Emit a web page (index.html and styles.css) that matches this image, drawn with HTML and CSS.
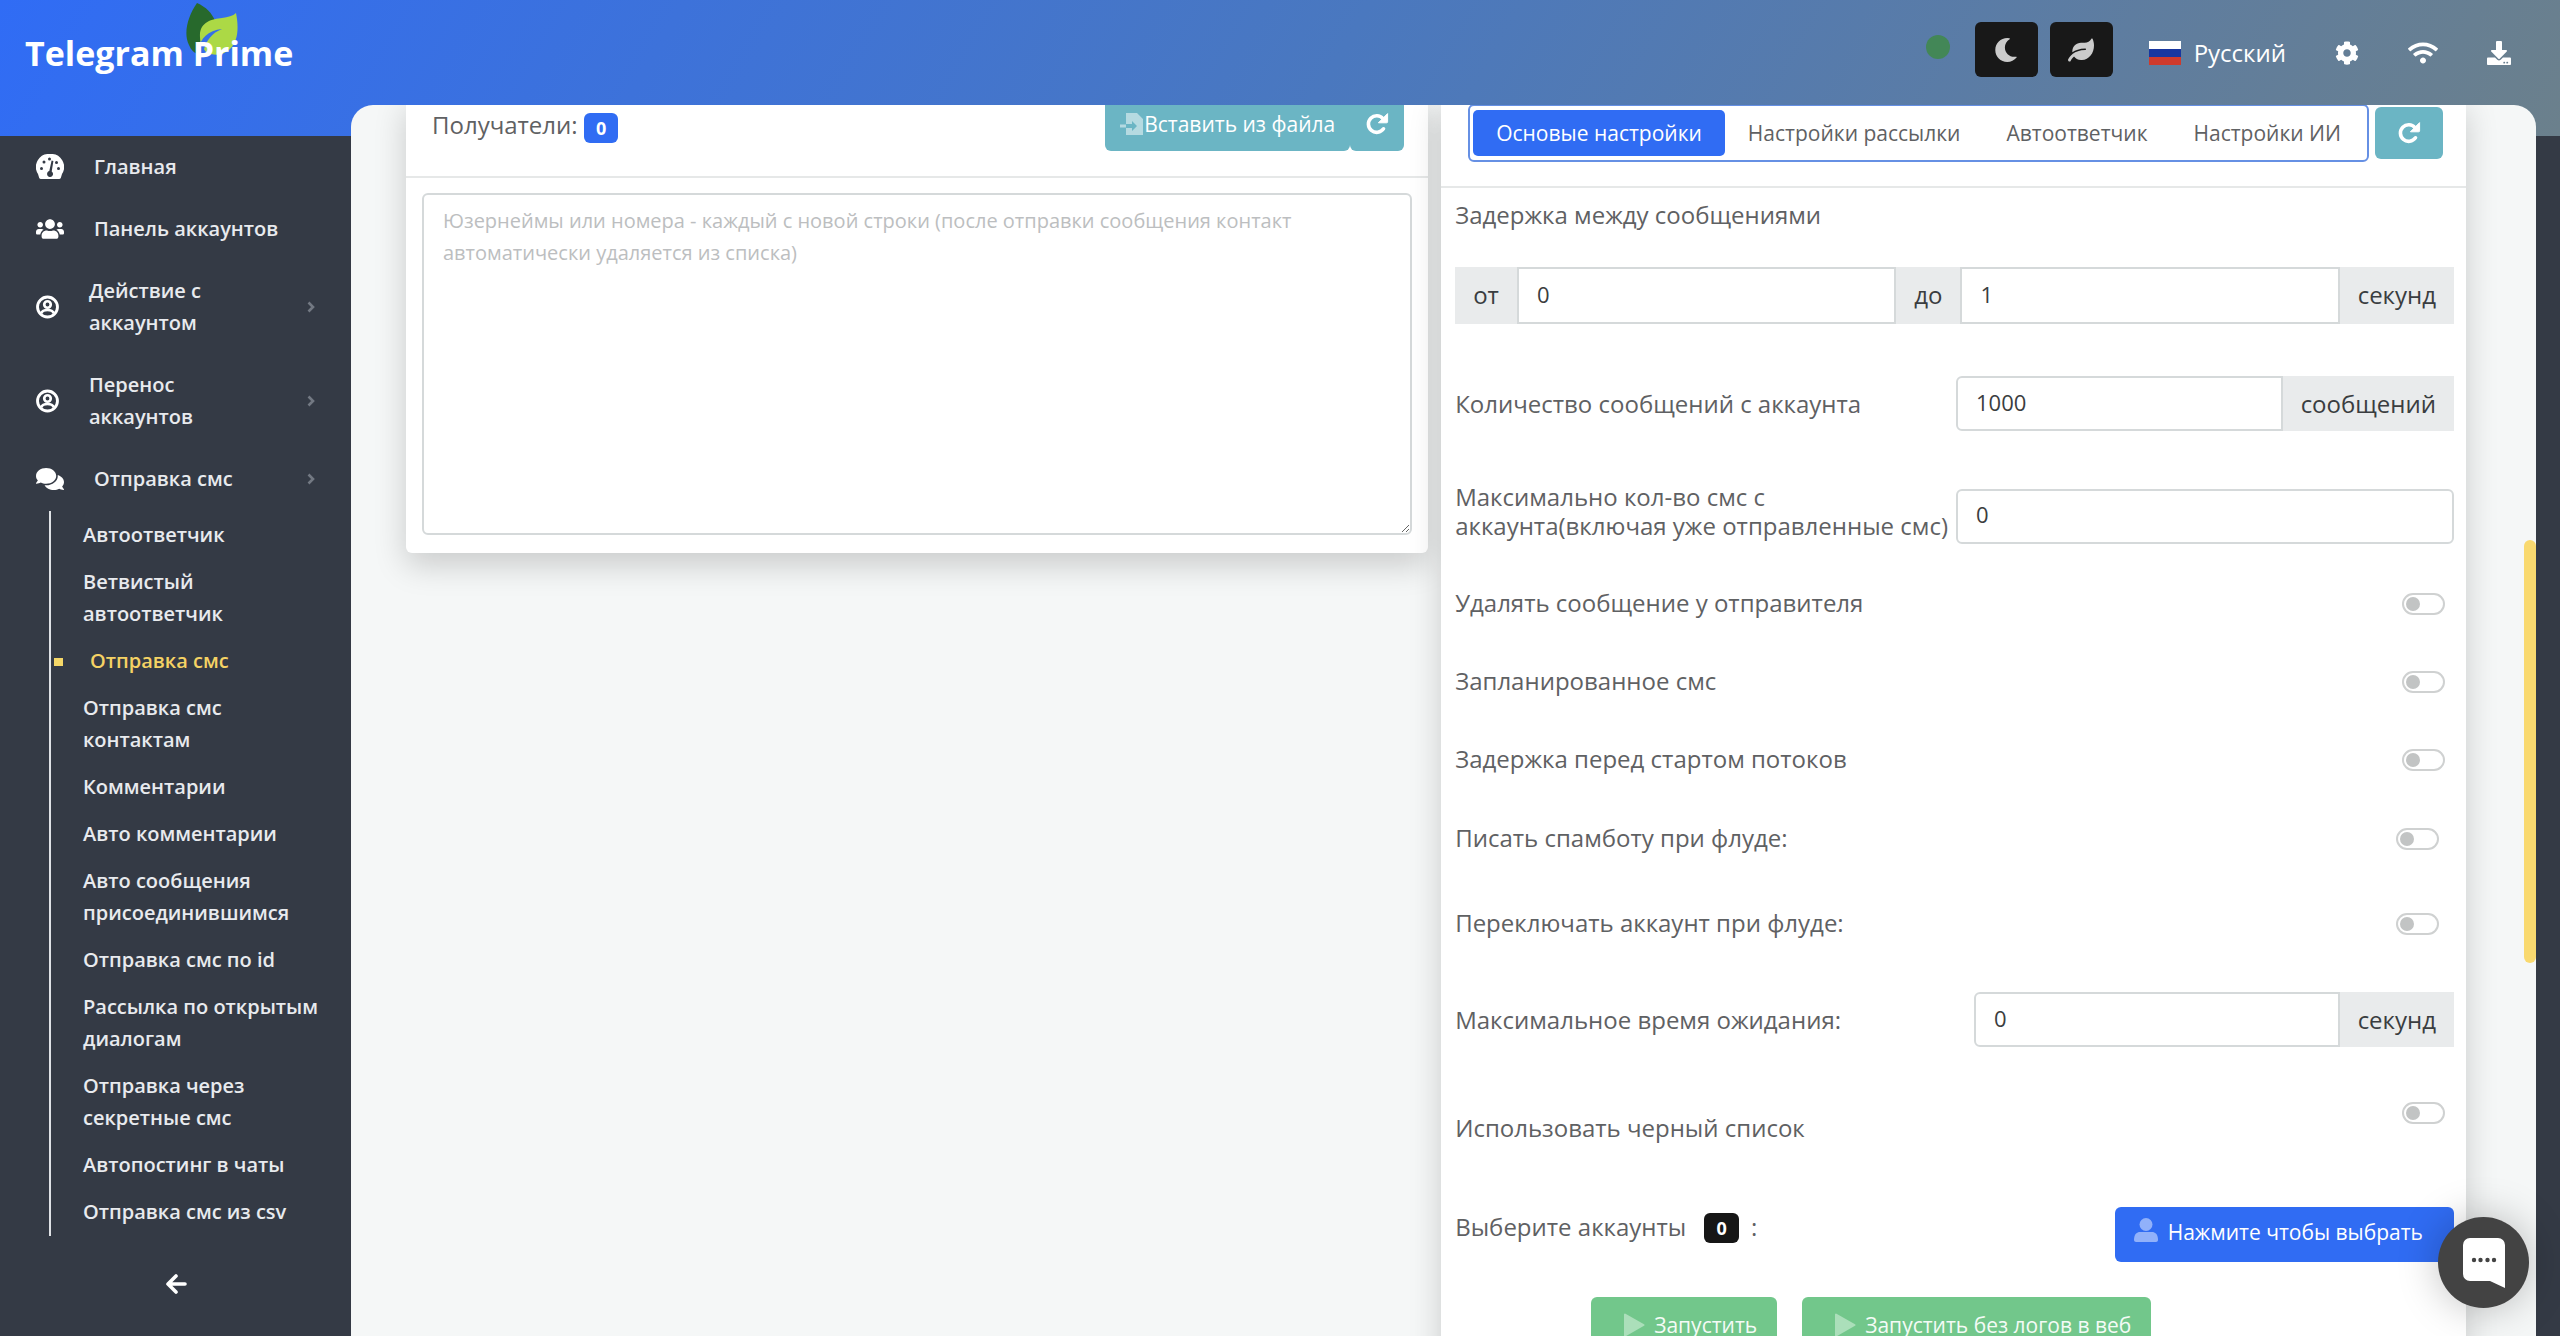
FILE: index.html
```html
<!DOCTYPE html>
<html lang="ru">
<head>
    <meta charset="UTF-8">
    <meta name="viewport" content="width=device-width, initial-scale=1.0">
    <title>Telegram Prime</title>
    <link rel="stylesheet" href="styles.css">
</head>
<body>
    <!-- shared icons -->
    <svg class="sprite" aria-hidden="true">
        <symbol id="i-redo" viewBox="0 0 24 24">
            <path d="M18.5 16.8A8.3 8.3 0 1 1 18 6.6" fill="none" stroke="currentColor" stroke-width="3.6" stroke-linecap="round"/>
            <path d="M22.6 1.6v8.2a1 1 0 0 1-1 1h-8.2z" fill="currentColor" stroke="currentColor" stroke-linejoin="round"/>
        </symbol>
        <symbol id="i-user-circle" viewBox="0 0 24 24">
            <circle cx="12" cy="12" r="10.4" fill="none" stroke="currentColor" stroke-width="3"/>
            <circle cx="12" cy="9.4" r="3.4" fill="none" stroke="currentColor" stroke-width="2.8"/>
            <path d="M5.5 18.5c1-2.6 3-3.4 6.5-3.4s5.5.8 6.5 3.4" fill="none" stroke="currentColor" stroke-width="2.8"/>
        </symbol>
        <symbol id="i-chevron" viewBox="0 0 8 12">
            <path d="M1.5 1.5 6 6l-4.5 4.5" fill="none" stroke="currentColor" stroke-width="2.6"/>
        </symbol>
        <symbol id="i-play" viewBox="0 0 22 24">
            <path d="M2 1.5v21L20.5 12z" fill="currentColor" stroke="currentColor" stroke-width="2" stroke-linejoin="round"/>
        </symbol>
    </svg>

    <header class="topbar">
        <a class="brand" href="#">
            <svg class="brand-leaf" viewBox="0 0 52 52" aria-hidden="true">
                <path d="M11 0C2 13-3 30 3 42c2 5 5 8 9 9 1-14 5-24 17-33C26 10 20 4 11 0z" fill="#27692c"/>
                <path d="M50 10c3 15 2 28-6 36-7 7-17 7-24 3-3-4-6-9-6-15C13 19 26 16 36 15c6-1 11-2 14-5z" fill="#acd945"/>
                <path d="M13 46c1-10 9-19 23-20-10 4-16 11-19 24z" fill="#356fe6"/>
            </svg>
            <span class="brand-name">Telegram Prime</span>
        </a>

        <div class="topbar-tools">
            <span class="online-dot"></span>
            <button class="dark-button" type="button" aria-label="Тёмная тема">
                <svg viewBox="0 0 512 512"><path fill="currentColor" d="M283.211 512c78.962 0 151.079-35.925 198.857-94.792 7.068-8.708-.639-21.43-11.562-19.35-124.203 23.654-238.262-71.576-238.262-196.954 0-72.222 38.662-138.635 101.498-174.394 9.686-5.512 7.25-20.197-3.756-22.23A258.156 258.156 0 0 0 283.211 0c-141.309 0-256 114.511-256 256 0 141.309 114.511 256 256 256z"/></svg>
            </button>
            <button class="dark-button" type="button" aria-label="Светлая тема">
                <svg viewBox="0 0 576 512"><path fill="currentColor" d="M546.2 9.7c-5.6-12.5-21.6-13-28.3-1.2C486.9 62.4 431.4 96 368 96h-80C182 96 96 182 96 288c0 7 .8 13.7 1.5 20.5C161.3 262.8 253.4 224 384 224c8.8 0 16 7.2 16 16s-7.2 16-16 16C132.6 256 26 410.1 2.4 468c-6.6 16.3 1.2 34.9 17.5 41.6 16.4 6.8 35-1.1 41.8-17.3 1.5-3.6 20.9-47.9 71.9-90.6 32.4 43.9 94 85.8 174.9 77.2C465.5 467.5 576 326.7 576 154.3c0-50.2-10.8-102.2-29.8-144.6z"/></svg>
            </button>
            <a class="language" href="#">
                <svg class="flag" viewBox="0 0 32 24" preserveAspectRatio="none"><path fill="#fff" d="M0 0h32v8H0z"/><path fill="#1837a0" d="M0 8h32v8H0z"/><path fill="#cf3a2c" d="M0 16h32v8H0z"/></svg>
                Русский
            </a>
            <a class="tool" href="#" aria-label="Настройки">
                <svg viewBox="0 0 512 512"><path fill="currentColor" d="M487.4 315.7l-42.6-24.6c4.3-23.2 4.3-47 0-70.2l42.6-24.6c4.9-2.8 7.1-8.6 5.5-14-11.1-35.6-30-67.8-54.7-94.6-3.8-4.1-10-5.1-14.8-2.3L380.8 110c-17.9-15.4-38.5-27.3-60.8-35.1V25.8c0-5.6-3.9-10.5-9.4-11.7-36.7-8.2-74.3-7.8-109.2 0-5.5 1.2-9.4 6.1-9.4 11.7V75c-22.2 7.9-42.8 19.8-60.8 35.1L88.7 85.5c-4.9-2.8-11-1.9-14.8 2.3-24.7 26.7-43.6 58.9-54.7 94.6-1.7 5.4.6 11.2 5.5 14L67.3 221c-4.3 23.2-4.3 47 0 70.2l-42.6 24.6c-4.9 2.8-7.1 8.6-5.5 14 11.1 35.6 30 67.8 54.7 94.6 3.8 4.1 10 5.1 14.8 2.3l42.6-24.6c17.9 15.4 38.5 27.3 60.8 35.1v49.2c0 5.6 3.9 10.5 9.4 11.7 36.7 8.2 74.3 7.8 109.2 0 5.5-1.2 9.4-6.1 9.4-11.7v-49.2c22.2-7.9 42.8-19.8 60.8-35.1l42.6 24.6c4.9 2.8 11 1.9 14.8-2.3 24.7-26.7 43.6-58.9 54.7-94.6 1.5-5.5-.7-11.3-5.6-14.1zM256 336c-44.1 0-80-35.9-80-80s35.9-80 80-80 80 35.9 80 80-35.9 80-80 80z"/></svg>
            </a>
            <a class="tool" href="#" aria-label="Прокси">
                <svg class="wifi" viewBox="0 0 640 512"><path fill="currentColor" d="M634.91 154.88C457.74-8.99 182.19-8.93 5.09 154.88c-6.66 6.16-6.79 16.59-.35 22.98l34.24 33.97c6.14 6.1 16.02 6.23 22.4.38 145.92-133.68 371.3-133.71 517.25 0 6.38 5.85 16.26 5.71 22.4-.38l34.24-33.97c6.43-6.39 6.3-16.82-.36-22.98zM320 352c-35.35 0-64 28.65-64 64s28.65 64 64 64 64-28.65 64-64-28.65-64-64-64zm202.67-83.59c-115.26-101.93-290.21-101.82-405.34 0-6.9 6.1-7.12 16.69-.57 23.15l34.44 33.99c6 5.92 15.66 6.32 22.05.8 83.95-72.57 209.74-72.41 293.49 0 6.39 5.52 16.05 5.13 22.05-.8l34.44-33.99c6.56-6.46 6.33-17.06-.56-23.15z"/></svg>
            </a>
            <a class="tool" href="#" aria-label="Скачать">
                <svg viewBox="0 0 512 512"><path fill="currentColor" d="M216 0h80c13.3 0 24 10.7 24 24v168h87.7c17.8 0 26.7 21.5 14.1 34.1L269.7 378.3c-7.5 7.5-19.8 7.5-27.3 0L90.1 226.1c-12.6-12.6-3.7-34.1 14.1-34.1H192V24c0-13.3 10.7-24 24-24zm296 376v112c0 13.3-10.7 24-24 24H24c-13.3 0-24-10.7-24-24V376c0-13.3 10.7-24 24-24h146.7l49 49c20.1 20.1 52.5 20.1 72.6 0l49-49H488c13.3 0 24 10.7 24 24zm-124 88c0-11-9-20-20-20s-20 9-20 20 9 20 20 20 20-9 20-20zm64 0c0-11-9-20-20-20s-20 9-20 20 9 20 20 20 20-9 20-20z"/></svg>
            </a>
        </div>
    </header>

    <div class="layout">
        <nav class="sidebar">
            <ul class="menu">
                <li><a class="menu-link" href="#">
                    <svg class="menu-icon" viewBox="0 0 28 26"><path fill="currentColor" d="M14 0a13 13 0 0 0-12 20c1 3 1 5 3 5h18c2 0 2-2 3-5A13 13 0 0 0 14 0z"/><g fill="#343a45"><circle cx="5.5" cy="14.5" r="1.5"/><circle cx="8" cy="8" r="1.5"/><circle cx="13.5" cy="5" r="1.5"/><circle cx="22.5" cy="14.5" r="1.5"/><circle cx="20.5" cy="8.5" r="1.5"/><path d="M15.6 6.5l1.8.5-1.7 10.5a3 3 0 1 1-2.4-.4z"/></g></svg>
                    <span class="menu-text">Главная</span>
                </a></li>
                <li><a class="menu-link" href="#">
                    <svg class="menu-icon" viewBox="0 0 640 512"><path fill="currentColor" d="M96 224c35.3 0 64-28.7 64-64s-28.7-64-64-64-64 28.7-64 64 28.7 64 64 64zm448 0c35.3 0 64-28.7 64-64s-28.7-64-64-64-64 28.7-64 64 28.7 64 64 64zm32 32h-64c-17.6 0-33.5 7.1-45.1 18.6 40.3 22.1 68.9 62 75.1 109.4h66c17.7 0 32-14.3 32-32v-32c0-35.3-28.7-64-64-64zm-256 0c61.9 0 112-50.1 112-112S381.9 32 320 32 208 82.1 208 144s50.1 112 112 112zm76.8 32h-8.3c-20.8 10-43.9 16-68.5 16s-47.6-6-68.5-16h-8.3C179.6 288 128 339.6 128 403.2V432c0 26.5 21.5 48 48 48h288c26.5 0 48-21.5 48-48v-28.8c0-63.6-51.6-115.2-115.2-115.2zm-223.7-13.4C161.5 263.1 145.6 256 128 256H64c-35.3 0-64 28.7-64 64v32c0 17.7 14.3 32 32 32h65.9c6.3-47.4 34.9-87.3 75.2-109.4z"/></svg>
                    <span class="menu-text">Панель аккаунтов</span>
                </a></li>
                <li><a class="menu-link" href="#">
                    <svg class="menu-icon round"><use href="#i-user-circle"/></svg>
                    <span class="menu-text">Действие с<br>аккаунтом</span>
                    <svg class="chevron"><use href="#i-chevron"/></svg>
                </a></li>
                <li><a class="menu-link" href="#">
                    <svg class="menu-icon round"><use href="#i-user-circle"/></svg>
                    <span class="menu-text">Перенос<br>аккаунтов</span>
                    <svg class="chevron"><use href="#i-chevron"/></svg>
                </a></li>
                <li><a class="menu-link" href="#">
                    <svg class="menu-icon" viewBox="0 0 576 512"><path fill="currentColor" d="M416 192c0-88.4-93.1-160-208-160S0 103.6 0 192c0 34.3 14.1 65.9 38 92-13.4 30.2-35.5 54.2-35.8 54.5-2.2 2.3-2.8 5.7-1.5 8.7S4.8 352 8 352c36.6 0 66.9-12.3 88.7-25 32.2 15.7 70.3 25 111.3 25 114.9 0 208-71.6 208-160zm122 220c23.9-26 38-57.7 38-92 0-66.9-53.5-124.2-129.3-148.1.9 6.6 1.3 13.3 1.3 20.1 0 105.9-107.7 192-240 192-10.8 0-21.3-.8-31.7-1.9C207.8 439.6 281.8 480 368 480c41 0 79.1-9.2 111.3-25 21.8 12.7 52.1 25 88.7 25 3.2 0 6.1-1.9 7.3-4.8 1.3-2.9.7-6.3-1.5-8.7-.3-.3-22.4-24.2-35.8-54.5z"/></svg>
                    <span class="menu-text">Отправка смс</span>
                    <svg class="chevron"><use href="#i-chevron"/></svg>
                </a>
                    <ul class="submenu">
                        <li><a href="#">Автоответчик</a></li>
                        <li><a href="#">Ветвистый<br>автоответчик</a></li>
                        <li class="active"><a href="#">Отправка смс</a></li>
                        <li><a href="#">Отправка смс<br>контактам</a></li>
                        <li><a href="#">Комментарии</a></li>
                        <li><a href="#">Авто комментарии</a></li>
                        <li><a href="#">Авто сообщения<br>присоединившимся</a></li>
                        <li><a href="#">Отправка смс по id</a></li>
                        <li><a href="#">Рассылка по открытым<br>диалогам</a></li>
                        <li><a href="#">Отправка через<br>секретные смс</a></li>
                        <li><a href="#">Автопостинг в чаты</a></li>
                        <li><a href="#">Отправка смс из csv</a></li>
                    </ul>
                </li>
            </ul>
            <button class="collapse" type="button" aria-label="Свернуть меню">
                <svg viewBox="0 0 22 20"><path d="M11 2 3 10l8 8M3.5 10H20" fill="none" stroke="currentColor" stroke-width="3.6" stroke-linecap="round" stroke-linejoin="round"/></svg>
            </button>
        </nav>

        <main class="content">
            <div class="cards">
                <section class="card">
                    <div class="card-header recipients-header">
                        <label class="recipients-title" for="recipients">Получатели: <span class="badge badge-blue">0</span></label>
                        <div class="button-group">
                            <button class="teal-button insert-button" type="button">
                                <svg viewBox="0 0 24 24"><path fill="currentColor" d="M6 1h11l6 6v16H6v-7h6v3l5-5-5-5v3H6z"/><path fill="currentColor" d="M0 12.500h6v3H0z"/></svg>Вставить из файла
                            </button>
                            <button class="teal-button" type="button" aria-label="Обновить">
                                <svg><use href="#i-redo"/></svg>
                            </button>
                        </div>
                    </div>
                    <div class="recipients-body">
                        <textarea id="recipients" class="recipients" placeholder="Юзернеймы или номера - каждый с новой строки (после отправки сообщения контакт автоматически удаляется из списка)"></textarea>
                    </div>
                </section>

                <section class="card">
                    <div class="card-header settings-header">
                        <div class="tabs" role="tablist">
                            <button class="tab active" type="button" role="tab" aria-selected="true">Основые настройки</button>
                            <button class="tab" type="button" role="tab">Настройки рассылки</button>
                            <button class="tab" type="button" role="tab">Автоответчик</button>
                            <button class="tab" type="button" role="tab">Настройки ИИ</button>
                        </div>
                        <button class="teal-button refresh-button" type="button" aria-label="Обновить">
                            <svg><use href="#i-redo"/></svg>
                        </button>
                    </div>

                    <form class="settings">
                        <div class="setting-title">Задержка между сообщениями</div>
                        <div class="input-group range-group">
                            <label class="addon" for="delay-from">от</label>
                            <input type="text" id="delay-from" value="0">
                            <label class="addon" for="delay-to">до</label>
                            <input type="text" id="delay-to" value="1">
                            <span class="addon">секунд</span>
                        </div>

                        <div class="setting">
                            <label for="count">Количество сообщений с аккаунта</label>
                            <div class="input-group wide">
                                <input type="text" id="count" value="1000">
                                <span class="addon">сообщений</span>
                            </div>
                        </div>
                        <div class="setting max-row">
                            <label for="max-count">Максимально кол-во смс с<br>аккаунта(включая уже отправленные смс)</label>
                            <div class="input-group wide">
                                <input type="text" id="max-count" value="0">
                            </div>
                        </div>

                        <div class="switches">
                            <div class="setting switch-row">
                                <label for="delete-msg">Удалять сообщение у отправителя</label>
                                <input type="checkbox" class="switch" id="delete-msg">
                            </div>
                            <div class="setting switch-row">
                                <label for="planned">Запланированное смс</label>
                                <input type="checkbox" class="switch" id="planned">
                            </div>
                            <div class="setting switch-row">
                                <label for="start-delay">Задержка перед стартом потоков</label>
                                <input type="checkbox" class="switch" id="start-delay">
                            </div>
                            <div class="setting flood-row">
                                <label for="spambot">Писать спамботу при флуде:</label>
                                <input type="checkbox" class="switch" id="spambot">
                            </div>
                            <div class="setting flood-row">
                                <label for="switch-account">Переключать аккаунт при флуде:</label>
                                <input type="checkbox" class="switch" id="switch-account">
                            </div>
                        </div>

                        <div class="setting wait-row">
                            <label for="wait">Максимальное время ожидания:</label>
                            <div class="input-group narrow">
                                <input type="text" id="wait" value="0">
                                <span class="addon">секунд</span>
                            </div>
                        </div>
                        <div class="setting blacklist-row">
                            <label for="blacklist">Использовать черный список</label>
                            <input type="checkbox" class="switch" id="blacklist">
                        </div>
                        <div class="setting accounts-row">
                            <div class="accounts-label">Выберите аккаунты <span class="badge badge-dark">0</span> :</div>
                            <button class="select-button" type="button">
                                <svg viewBox="0 0 24 24"><circle cx="12" cy="6.5" r="6.5" fill="currentColor"/><path fill="currentColor" d="M0 22c0-6 3-8 6-8h12c3 0 6 2 6 8 0 1-1 2-2 2H2c-1 0-2-1-2-2z"/></svg>
                                Нажмите чтобы выбрать
                            </button>
                        </div>

                        <div class="actions">
                            <button class="start-button" type="button"><svg><use href="#i-play"/></svg>Запустить</button>
                            <button class="start-button" type="button"><svg><use href="#i-play"/></svg>Запустить без логов в веб</button>
                        </div>
                    </form>
                </section>
            </div>
            <div class="scroll-thumb"></div>
        </main>
    </div>

    <button class="chat" type="button" aria-label="Чат">
        <svg viewBox="0 0 42 50"><path fill="#fff" d="M7 0h28a7 7 0 0 1 7 7v43l-15-7H7a7 7 0 0 1-7-7V7a7 7 0 0 1 7-7z"/><g fill="#434343"><circle cx="11" cy="22" r="2.2"/><circle cx="17.500" cy="22" r="2.2"/><circle cx="24.500" cy="22" r="2.2"/><circle cx="31" cy="22" r="2.2"/></g></svg>
    </button>
</body>
</html>
```
FILE: styles.css
```css
* {
    box-sizing: border-box;
}

body {
    margin: 0;
    height: 100vh;
    overflow: hidden;
    display: flex;
    flex-direction: column;
    position: relative;
    font-family: "Open Sans", "Noto Sans", sans-serif;
    font-size: 24px;
    line-height: 32px;
    color: #5f6163;
    background: #343a45 linear-gradient(120deg, #306cf5 0%, #4a78bf 52%, #6b808c 100%) no-repeat 0 0 / 100% 136px;
}

button,
input,
textarea {
    font: inherit;
}

button {
    border: none;
    padding: 0;
    cursor: pointer;
}

a {
    color: inherit;
    text-decoration: none;
}

ul {
    list-style: none;
    margin: 0;
    padding: 0;
}

svg {
    flex: none;
    display: block;
}

.sprite {
    display: none;
}

/* Header */
.topbar {
    height: 105px;
    flex: none;
    display: flex;
    align-items: center;
    justify-content: space-between;
    padding: 0 48px 0 25px;
    color: #ffffff;
}

.brand {
    position: relative;
    font-size: 34px;
    font-weight: 700;
    line-height: 44px;
}

.brand-leaf {
    position: absolute;
    left: 161px;
    top: -28px;
    width: 52px;
    height: 52px;
}

.brand-name {
    position: relative;
}

.topbar-tools {
    display: flex;
    align-items: center;
}

.online-dot {
    width: 24px;
    height: 24px;
    margin: 0 25px 12px 0;
    border-radius: 50%;
    background-color: #438757;
}

.dark-button {
    width: 63px;
    height: 55px;
    margin: 0 12px 6px 0;
    border-radius: 6px;
    background-color: #181818;
    color: #cbcbcb;
    display: flex;
    align-items: center;
    justify-content: center;
}

.dark-button svg {
    width: 26px;
    height: 24px;
}

.language {
    display: flex;
    align-items: center;
    gap: 13px;
    margin: 0 48px 0 24px;
}

.flag {
    width: 32px;
    height: 24px;
}

.tool {
    margin-left: 48px;
}

.language + .tool {
    margin-left: 0;
}

.tool svg {
    width: 26px;
    height: 24px;
}

.tool .wifi {
    width: 30px;
}

/* Sidebar */
.layout {
    flex: 1;
    min-height: 0;
    display: flex;
    padding-right: 24px;
}

.sidebar {
    width: 351px;
    flex: none;
    padding-top: 32px;
    color: #e8eaee;
    font-size: 20px;
    font-weight: 600;
}

.menu-link {
    display: flex;
    align-items: center;
    padding: 14px 36px 16px;
    min-height: 62px;
}

.menu-icon {
    width: 28px;
    height: 26px;
    margin-right: 30px;
    color: #ffffff;
}

.menu-icon.round {
    width: 23px;
    height: 24px;
}

.chevron {
    width: 8px;
    height: 12px;
    margin-left: auto;
    color: #737983;
}

.submenu {
    margin-left: 49px;
    padding: 1px 0 0 32px;
    border-left: 2px solid #dfe2e6;
}

.submenu li {
    padding: 7px 0 8px;
}

.submenu .active {
    position: relative;
    padding-left: 7px;
    color: #f5d264;
}

.submenu .active::before {
    content: "";
    position: absolute;
    left: -29px;
    top: 20px;
    width: 9px;
    height: 8px;
    background-color: #f5d768;
}

.collapse {
    display: block;
    margin: 38px auto 0;
    background: none;
    color: #ffffff;
}

.collapse svg {
    width: 22px;
    height: 20px;
}

/* Content */
.content {
    flex: 1;
    min-width: 0;
    position: relative;
    overflow: hidden;
    border-radius: 22px 22px 0 0;
    background-color: #f5f7f7;
}

.scroll-thumb {
    position: absolute;
    right: 0;
    top: 435px;
    width: 12px;
    height: 423px;
    border-radius: 6px;
    background-color: #f9d96f;
}

/* the list is scrolled, so its top edge is cut off */
.cards {
    display: grid;
    grid-template-columns: 1fr 1fr;
    gap: 13px;
    align-items: start;
    margin-top: -8px;
    padding: 0 70px 0 55px;
}

.card {
    background-color: #ffffff;
    border-radius: 0 0 6px 6px;
    box-shadow: 0 12px 32px rgba(0, 0, 0, 0.18);
}

.card-header {
    display: flex;
    border-bottom: 2px solid #e6e8e8;
}

.recipients-header {
    justify-content: space-between;
    padding: 0 24px 25px 26px;
}

.recipients-title {
    padding-top: 12px;
}

.badge {
    display: inline-block;
    padding: 0 12px;
    border-radius: 6px;
    color: #ffffff;
    font-size: 18px;
    font-weight: 700;
    line-height: 30px;
    vertical-align: top;
}

.badge-blue {
    margin-top: 4px;
    background-color: #306cf3;
}

.badge-dark {
    margin: 2px 6px 0 12px;
    background-color: #161616;
}

.button-group {
    display: flex;
}

.teal-button {
    height: 54px;
    padding: 0 15px;
    border-radius: 6px;
    display: flex;
    align-items: center;
    background-color: #6bb5c4;
    color: #ffffff;
    font-size: 21px;
}

.teal-button svg {
    width: 24px;
    height: 24px;
}

.insert-button svg {
    color: #b5dae1;
}

.recipients-body {
    padding: 15px 16px 18px;
}

.recipients {
    display: block;
    width: 100%;
    height: 342px;
    padding: 10px 19px;
    border: 2px solid #d5d9da;
    border-radius: 6px;
    font-size: 20px;
    resize: vertical;
}

.recipients::placeholder {
    color: #bcbec0;
}

/* Settings */
.settings-header {
    align-items: center;
    gap: 6px;
    padding: 7px 23px 24px 27px;
}

.tabs {
    flex: 1;
    display: flex;
    padding: 4px 3px;
    border: 2px solid #6690e4;
    border-radius: 6px;
}

.tab {
    height: 46px;
    padding: 0 23px;
    border-radius: 5px;
    background: none;
    color: #5f6163;
    font-size: 21px;
    white-space: nowrap;
}

.tab.active {
    background-color: #306cf3;
    color: #ffffff;
}

.refresh-button {
    height: 52px;
    padding: 0 22px;
}

.settings {
    padding: 11px 12px 24px 14px;
}

.setting {
    display: flex;
    align-items: center;
    justify-content: space-between;
}

.input-group {
    display: flex;
    height: 55px;
    color: #3a3d40;
}

.input-group input {
    flex: 1;
    width: 0;
    padding: 0 18px 4px;
    border: 2px solid #d5d9da;
    color: #3a3d40;
    font-size: 22px;
}

.input-group input:first-child {
    border-radius: 6px 0 0 6px;
}

.input-group input:only-child {
    border-radius: 6px;
}

.addon {
    padding: 0 18px;
    background-color: #e9ebec;
    line-height: 55px;
}

.range-group {
    height: 57px;
    margin: 36px 0 52px;
}

.wide {
    width: 498px;
}

.narrow {
    width: 480px;
}

.max-row {
    margin-top: 58px;
    line-height: 29px;
}

.max-row label {
    padding-bottom: 12px;
    margin: -8px 0;
}

.switches {
    margin-top: 20px;
}

.switch {
    appearance: none;
    width: 43px;
    height: 22px;
    margin: 2px 9px 0 0;
    padding: 2px;
    border: 2px solid #cfd1d1;
    border-radius: 11px;
    background-color: #ffffff;
    cursor: pointer;
}

.switch::before {
    content: "";
    display: block;
    width: 14px;
    height: 14px;
    border-radius: 50%;
    background-color: #c2c4c4;
}

.switch:checked::before {
    margin-left: auto;
    background-color: #306cf3;
}

.switch-row {
    height: 78px;
}

.flood-row {
    height: 85px;
    padding: 0 6px 6px 0;
}

.wait-row {
    margin-top: 24px;
}

.blacklist-row {
    height: 44px;
    margin-top: 53px;
    align-items: flex-start;
}

.blacklist-row label {
    align-self: flex-end;
}

.accounts-row {
    margin-top: 63px;
    align-items: flex-start;
}

.accounts-label {
    padding-top: 4px;
}

.select-button {
    display: flex;
    gap: 10px;
    height: 55px;
    padding: 11px 31px 0 19px;
    border-radius: 6px;
    background-color: #306cf3;
    color: #ffffff;
    font-size: 21px;
    line-height: 28px;
}

.select-button svg {
    width: 24px;
    height: 24px;
    color: #91b1fa;
}

.actions {
    display: flex;
    gap: 25px;
    margin-top: 35px;
    padding-left: 136px;
}

.start-button {
    display: flex;
    align-items: center;
    gap: 9px;
    height: 55px;
    padding: 0 20px 0 32px;
    border-radius: 6px;
    background-color: #72c78b;
    color: #f4fbf6;
    font-size: 21px;
}

.start-button svg {
    width: 22px;
    height: 24px;
    color: #abdfba;
}

/* Chat */
.chat {
    position: absolute;
    right: 31px;
    bottom: 28px;
    width: 91px;
    height: 91px;
    border-radius: 50%;
    background-color: #434343;
    box-shadow: 0 0 40px rgba(0, 0, 0, 0.25);
    display: flex;
    align-items: center;
    justify-content: center;
}

.chat svg {
    width: 42px;
    height: 50px;
}
```
